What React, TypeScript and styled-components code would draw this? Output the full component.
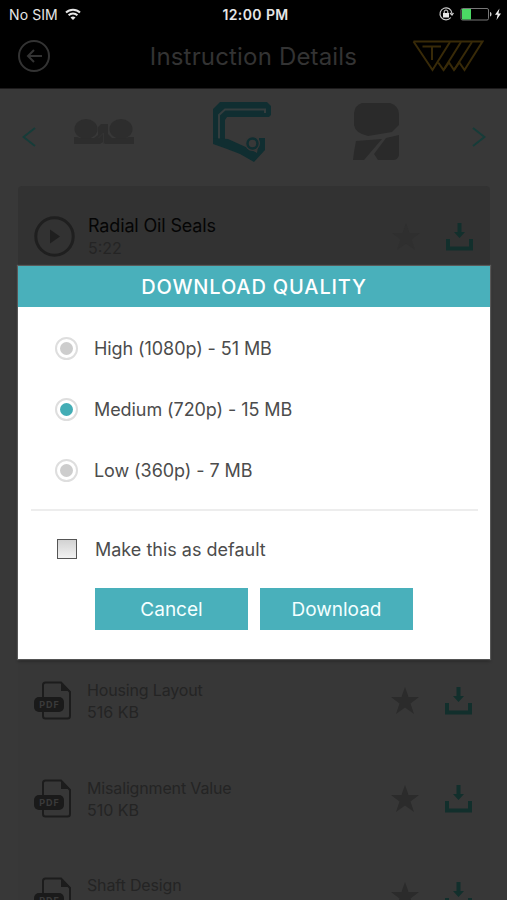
import { useState } from "react";
import styled, { createGlobalStyle } from "styled-components";

const GlobalStyle = createGlobalStyle`
  * {
    box-sizing: border-box;
  }

  body {
    margin: 0;
    background: #383838;
    font-family: Inter, "Liberation Sans", sans-serif;
  }
`;

const Screen = styled.div`
  position: relative;
  width: 507px;
  height: 900px;
  overflow: hidden;
  background: #383838;
`;

const StatusBar = styled.div`
  display: grid;
  grid-template-columns: 1fr auto 1fr;
  align-items: center;
  height: 28px;
  padding: 0 5px 0 9px;
  background: #000;
  color: #e6e6e6;
  font-size: 14px;
`;

const Carrier = styled.div`
  display: flex;
  align-items: center;
  gap: 7px;
  letter-spacing: 0.1px;
`;

const Clock = styled.div`
  font-weight: 600;
  font-size: 14px;
  letter-spacing: 0.4px;
`;

const StatusIcons = styled.div`
  display: flex;
  align-items: center;
  justify-content: flex-end;
`;

const Header = styled.header`
  display: grid;
  grid-template-columns: 72px 1fr 72px;
  align-items: center;
  height: 61px;
  padding: 0 23px 4px 18px;
  background: #000;
  border-bottom: 1px solid #1d1b1c;
`;

const Title = styled.h1`
  margin: 0 0 0 5px;
  color: #333;
  font-size: 24px;
  font-weight: 400;
  letter-spacing: 0.17px;
  text-align: center;
  white-space: nowrap;
`;

const Carousel = styled.div`
  display: flex;
  align-items: center;
  justify-content: space-between;
  height: 97px;
  padding: 0 21px 1px 22px;
`;

const Slides = styled.div`
  display: flex;
  align-items: center;
  justify-content: space-between;
  width: 328px;
  margin: 0 32px 11px 0;
`;

const List = styled.div<{ $height: number; $active?: boolean }>`
  height: ${(props) => props.$height}px;
  margin: 0 17px 0 18px;
  border-radius: 4px;
  background: ${(props) => (props.$active ? "#323232" : "#373737")};
`;

const Row = styled.div<{ $video?: boolean }>`
  display: grid;
  grid-template-columns: ${(props) => (props.$video ? "54px 1fr 28px 28px" : "53px 1fr 28px 28px")};
  align-items: center;
  height: ${(props) => (props.$video ? 101 : 97.7)}px;
  padding: 0 ${(props) => (props.$video ? 16 : 17)}px 0 16px;
`;

const StarCell = styled.div`
  display: flex;
  margin-left: -26px;
`;

const RowName = styled.div<{ $video?: boolean }>`
  color: ${(props) => (props.$video ? "#050505" : "#242424")};
  font-size: ${(props) => (props.$video ? 18 : 16)}px;
  line-height: 22px;
  letter-spacing: -0.15px;
  white-space: nowrap;
`;

const RowMeta = styled.div`
  min-height: 22px;
  color: #242424;
  font-size: 16px;
  line-height: 22px;
`;

const Modal = styled.div`
  position: absolute;
  top: 266px;
  left: 18px;
  width: 472px;
  height: 393px;
  background: #fff;
  box-shadow: 0 0 1px 1px rgba(130, 130, 130, 0.5), 0 2px 3px rgba(0, 0, 0, 0.4);
`;

const ModalTitle = styled.h2`
  display: flex;
  align-items: center;
  justify-content: center;
  height: 41px;
  margin: 0 0 11px;
  background: #49b0bb;
  color: #fff;
  font-size: 20px;
  font-weight: 500;
  letter-spacing: 0.85px;
`;

const Option = styled.button`
  display: flex;
  align-items: center;
  gap: 16px;
  width: 100%;
  height: 61px;
  padding: 0 0 0 37px;
  border: none;
  background: none;
  color: #4c4c4c;
  font: inherit;
  font-size: 18px;
  letter-spacing: -0.08px;
  cursor: pointer;
`;

const Radio = styled.span<{ $selected: boolean }>`
  display: flex;
  align-items: center;
  justify-content: center;
  width: 23px;
  height: 23px;
  border: 2px solid #dedede;
  border-radius: 50%;

  &::after {
    content: "";
    width: 13px;
    height: 13px;
    border-radius: 50%;
    background: ${(props) => (props.$selected ? "#43adb5" : "#cdcdcd")};
  }
`;

const Divider = styled.div`
  height: 2px;
  margin: 8px 12px 0 13px;
  background: #ededed;
`;

const DefaultOption = styled(Option)`
  gap: 18px;
  height: 77px;
  padding: 0 0 1px 39px;
  letter-spacing: 0;
`;

const Checkbox = styled.span<{ $checked: boolean }>`
  width: 20px;
  height: 20px;
  border: 1px solid #555;
  background: ${(props) => (props.$checked ? "#49b0bb" : "linear-gradient(#d2d2d2, #f2f2f2)")};
`;

const Actions = styled.div`
  display: flex;
  gap: 12px;
  margin-left: 77px;
`;

const ActionButton = styled.button`
  width: 153px;
  height: 42px;
  padding: 0;
  border: none;
  background: #49b0bb;
  color: #f4ffff;
  font: inherit;
  font-size: 19px;
`;

const WifiIcon = () => (
  <svg width="16" height="13" viewBox="0 0 16 13" fill="none" stroke="#e6e6e6" strokeWidth="2">
    <path d="M1 4.5a10 10 0 0 1 14 0M3.6 7.3a6.2 6.2 0 0 1 8.8 0" />
    <path d="M5.5 9.6a3.6 3.6 0 0 1 5 0L8 12z" fill="#e6e6e6" stroke="none" />
  </svg>
);

const BatteryIcons = () => (
  <svg width="64" height="16" viewBox="0 0 64 16" fill="none">
    <path d="M12.8 11.5A6 6 0 1 1 14 7.5M12 7l2 2 1.5-2" stroke="#ccc" strokeWidth="1.2" />
    <rect x="5" y="7" width="6" height="4.5" fill="#e6e6e6" />
    <path d="M6.2 7V5.8a1.8 1.8 0 0 1 3.6 0V7" stroke="#e6e6e6" />
    <rect x="23" y="2.5" width="27.5" height="11.5" rx="1.5" stroke="#777" />
    <path d="M24 3h9v10.5h-9z" fill="#4bd964" />
    <path d="M52 6v4.5c2-.5 2-4 0-4.5z" fill="#ccc" />
    <path d="M61.5 2.5L57 8.7h2.6L58.5 14l4.500-6.500h-2.600z" fill="#f2f2f2" />
  </svg>
);

const BackIcon = () => (
  <svg width="32" height="32" viewBox="0 0 32 32" fill="none" stroke="#333" strokeWidth="2">
    <circle cx="16" cy="16" r="15" />
    <path d="M24 16H10.500M16 10l-6 6 6 6" />
  </svg>
);

const Logo = () => (
  <svg width="72" height="33" viewBox="0 0 72 33" fill="none" stroke="#382a08" strokeWidth="2">
    <path d="M1.5 1.5H70.5L52.5 30l-5.2-7.5L42 30l-5-7.5L31.5 30l-5.3-7.5" />
    <path d="M1.5 1.5L20.5 30 38 2M31.5 30L49 2M42 30L60 2M10.5 6.5H29M20 6.5V20" />
  </svg>
);

const Chevron = ({ right }: { right?: boolean }) => (
  <svg width="14" height="20" viewBox="0 0 14 20" fill="none" stroke="#163c39" strokeWidth="2">
    <path d={right ? "M1 1l11.5 9L1 19" : "M13 1L1.5 10 13 19"} />
  </svg>
);

const PairIcon = () => (
  <svg width="60" height="28" viewBox="0 0 60 28" fill="#2d2d2d">
    <path d="M0 19h3l3 1h14l4-3V9l3-3h7v10l4 4h13l4-1h5v7H31l-2-2-3 2H0z" />
    <ellipse cx="12" cy="11" rx="11.500" ry="10" />
    <ellipse cx="47" cy="11" rx="11.500" ry="10" />
    <path d="M29.500 26V15l-5 5" fill="none" stroke="#343434" />
  </svg>
);

const SealIcon = () => (
  <svg width="60" height="62" viewBox="0 0 60 62" fill="none">
    <path d="M0 40V8l7-7h47l4 4v9l-2 2H14l-2 3v22z" fill="#102e31" />
    <path d="M6 39V14l6-5.500h40v3.500" stroke="#343d3e" strokeWidth="2" />
    <path d="M0 37l15 1 20 9 9 5 2-12V37h6v12L41 61 27 53 14 48 0 43z" fill="#102e31" />
    <circle cx="39.500" cy="42.500" r="7.500" fill="#383838" />
    <circle cx="39.500" cy="42.500" r="5" stroke="#102e31" strokeWidth="2.500" />
  </svg>
);

const BlockIcon = () => (
  <svg width="50" height="60" viewBox="0 0 50 60" fill="#2a2a2a">
    <path d="M10 1h28q9 3 9 11v11l-7 7-24 4Q3 31 2 23V11q1-8 8-10z" />
    <path d="M4 39l26-2-18 21H1l1-8zM34 36l13-3v20q-1 5-6 5H26l-4-6z" />
  </svg>
);

const PlayIcon = () => (
  <svg width="41" height="41" viewBox="0 0 41 41">
    <circle cx="20.500" cy="20.500" r="18.700" fill="none" stroke="#1f1f1f" strokeWidth="3" />
    <path d="M16 13.500v14l10-7z" fill="#1f1f1f" />
  </svg>
);

const PdfIcon = () => (
  <svg width="38" height="39" viewBox="0 0 38 39">
    <path
      d="M9 17V4q0-2.500 2.500-2.500H27L36 11v24q0 2.500-2.500 2.500h-22Q9 37.500 9 35v-5"
      fill="none"
      stroke="#1c1c1c"
      strokeWidth="2"
    />
    <path d="M27 1l9 9h-9z" fill="#1c1c1c" />
    <rect x="0" y="16" width="30" height="15" rx="5" fill="#1a1a1a" />
    <text x="15.500" y="27" fill="#3a3a3a" fontSize="9" fontWeight="700" letterSpacing="1" textAnchor="middle">
      PDF
    </text>
  </svg>
);

const StarIcon = ({ color }: { color: string }) => (
  <svg width="28" height="28" viewBox="0 0 28 28" fill={color}>
    <path d="M14 0l3.500 10H28l-8.500 6.500L23 27l-9-6.500L5 27l3.500-10.500L0 10h10.500z" />
  </svg>
);

const DownloadIcon = () => (
  <svg width="27" height="28" viewBox="0 0 27 28" fill="#122f2c">
    <path d="M0 16h4v7.500h19V16h4v11.500H0zM11.500 0h4v9h3.500l-5.500 6L8 9h3.500z" />
  </svg>
);

const qualities = ["High (1080p) - 51 MB", "Medium (720p) - 15 MB", "Low (360p) - 7 MB"];

const documents = [
  { name: "Housing Layout", size: "516 KB" },
  { name: "Misalignment Value", size: "510 KB" },
  { name: "Shaft Design", size: "" },
];

export default function App() {
  const [quality, setQuality] = useState(1);
  const [isDefault, setIsDefault] = useState(false);

  return (
    <Screen>
      <GlobalStyle />
      <StatusBar>
        <Carrier>
          No SIM
          <WifiIcon />
        </Carrier>
        <Clock>12:00 PM</Clock>
        <StatusIcons>
          <BatteryIcons />
        </StatusIcons>
      </StatusBar>
      <Header>
        <BackIcon />
        <Title>Instruction Details</Title>
        <Logo />
      </Header>
      <Carousel>
        <Chevron />
        <Slides>
          <PairIcon />
          <SealIcon />
          <BlockIcon />
        </Slides>
        <Chevron right />
      </Carousel>

      <List $height={466} $active>
        <Row $video>
          <PlayIcon />
          <div>
            <RowName $video>Radial Oil Seals</RowName>
            <RowMeta>5:22</RowMeta>
          </div>
          <StarCell>
            <StarIcon color="#2f2f2f" />
          </StarCell>
          <DownloadIcon />
        </Row>
      </List>
      <List $height={300}>
        {documents.map((doc) => (
          <Row key={doc.name}>
            <PdfIcon />
            <div>
              <RowName>{doc.name}</RowName>
              <RowMeta>{doc.size}</RowMeta>
            </div>
            <StarCell>
              <StarIcon color="#2b2b2b" />
            </StarCell>
            <DownloadIcon />
          </Row>
        ))}
      </List>

      <Modal>
        <ModalTitle>DOWNLOAD QUALITY</ModalTitle>
        {qualities.map((label, index) => (
          <Option key={label} onClick={() => setQuality(index)}>
            <Radio $selected={quality === index} />
            {label}
          </Option>
        ))}
        <Divider />
        <DefaultOption onClick={() => setIsDefault(!isDefault)}>
          <Checkbox $checked={isDefault} />
          Make this as default
        </DefaultOption>
        <Actions>
          <ActionButton>Cancel</ActionButton>
          <ActionButton>Download</ActionButton>
        </Actions>
      </Modal>
    </Screen>
  );
}
